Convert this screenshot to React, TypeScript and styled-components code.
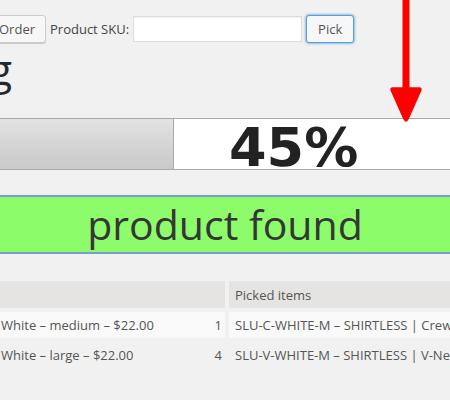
import React from "react";
import styled, { createGlobalStyle } from "styled-components";

const Global = createGlobalStyle`
  html, body { margin: 0; padding: 0; background: #f1f1f1; }
  body {
    font-family: "Open Sans", "Liberation Sans", sans-serif;
    color: #444;
    font-size: 13px;
    overflow: hidden;
  }
`;

const Page = styled.div`
  position: relative;
  width: 450px;
  height: 400px;
  overflow: hidden;
`;

const Toolbar = styled.div`
  display: flex;
  align-items: center;
  padding-top: 15px;
  height: 28px;
`;

const Button = styled.button<{ $focus?: boolean; $offset?: number }>`
  height: 28px;
  padding: 0 ${(p) => (p.$focus ? 11 : 10)}px;
  margin-left: ${(p) => p.$offset ?? 0}px;
  font-family: "Open Sans", "Liberation Sans", sans-serif;
  font-size: 13px;
  line-height: 26px;
  color: #555;
  background: #f7f7f7;
  border: 1px solid ${(p) => (p.$focus ? "#5b9dd9" : "#ccc")};
  border-radius: 3px;
  box-shadow: ${(p) =>
    p.$focus ? "0 0 3px rgba(0,115,170,0.8)" : "0 1px 0 #ccc"};
  cursor: pointer;
`;

const Label = styled.label`
  margin: 0 4px 0 4px;
  color: #444;
  font-size: 13px;
`;

const Input = styled.input`
  width: 169px;
  height: 26px;
  box-sizing: border-box;
  margin-right: 4px;
  border: 1px solid #ddd;
  background: #fff;
  box-shadow: inset 0 1px 2px rgba(0, 0, 0, 0.07);
  font-family: "Open Sans", "Liberation Sans", sans-serif;
  font-size: 13px;
`;

const HeadingClip = styled.div`
  display: flex;
  justify-content: flex-end;
  width: 12px;
  margin-top: 1px;
`;

const Heading = styled.h1`
  margin: 0;
  font-family: "Open Sans", "Liberation Sans", sans-serif;
  font-weight: 400;
  font-size: 42px;
  line-height: 50px;
  color: #23282d;
  white-space: nowrap;
`;

const Bar = styled.div`
  display: flex;
  margin: 24px -10px 0;
  height: 50px;
  border: 1px solid #aaa;
  background: #fff;
`;

const Fill = styled.div`
  flex: none;
  border-right: 1px solid #aaa;
  background: linear-gradient(to bottom, #e2e2e2 0%, #d4d4d4 55%, #c9c9c9 100%);
`;

const Percent = styled.div`
  flex: 1;
  padding-left: 55px;
  font-family: "DejaVu Sans", Verdana, sans-serif;
  font-weight: 700;
  font-size: 54px;
  line-height: 58px;
  height: 50px;
  color: #222;
`;

const Notice = styled.div`
  margin: 25px -20px 0;
  height: 55px;
  border-top: 2px solid #7c9cc9;
  border-bottom: 2px solid #7c9cc9;
  background: #8cfc6b;
  text-align: center;
  font-size: 41px;
  font-weight: 500;
  line-height: 55px;
  color: #363636;
`;

const Table = styled.div`
  display: grid;
  grid-template-columns: 233px 600px;
  grid-auto-rows: 26px;
  grid-template-rows: 27px;
  gap: 4px;
  margin: 27px 0 0 -8px;
`;

const Cell = styled.div<{ $tone: "head" | "odd" | "even" }>`
  display: flex;
  align-items: center;
  justify-content: space-between;
  padding: 0 3px 0 6px;
  background: ${(p) =>
    p.$tone === "head" ? "#e5e4e2" : p.$tone === "odd" ? "#f9f9f9" : "transparent"};
  color: #555;
  font-size: 13px;
  white-space: nowrap;
  overflow: hidden;
`;

const NameCell = styled(Cell)`
  padding-left: 9px;
`;

const Arrow = styled.svg`
  position: absolute;
  left: 388px;
  top: 0;
`;

const rows = [
  { name: "White – medium – $22.00", qty: 1, pick: "SLU-C-WHITE-M – SHIRTLESS | Crew Neck" },
  { name: "White – large – $22.00", qty: 4, pick: "SLU-V-WHITE-M – SHIRTLESS | V-Neck" },
];

export default function App() {
  return (
    <Page>
      <Global />
      <Toolbar>
        <Button $offset={-12}>Order</Button>
        <Label>Product SKU:</Label>
        <Input type="text" />
        <Button $focus>Pick</Button>
      </Toolbar>
      <HeadingClip>
        <Heading>Picking</Heading>
      </HeadingClip>
      <Bar>
        <Fill style={{ width: 182 }} />
        <Percent>45%</Percent>
      </Bar>
      <Notice>product found</Notice>
      <Table>
        <NameCell $tone="head" />
        <Cell $tone="head">Picked items</Cell>
        {rows.map((r, i) => (
          <React.Fragment key={i}>
            <NameCell $tone={i % 2 === 0 ? "odd" : "even"}>
              <span>{r.name}</span>
              <span>{r.qty}</span>
            </NameCell>
            <Cell $tone={i % 2 === 0 ? "odd" : "even"}>{r.pick}</Cell>
          </React.Fragment>
        ))}
      </Table>
      <Arrow width="36" height="124" viewBox="0 0 36 124">
        <rect x="14.5" y="0" width="7" height="92" fill="#f00" />
        <path
          d="M5 88 Q2 88 3.5 91 L16 119 Q18 123 20 119 L32.5 91 Q34 88 31 88 Z"
          fill="#f00"
          stroke="#f00"
          strokeWidth="1.5"
          strokeLinejoin="round"
        />
      </Arrow>
    </Page>
  );
}
